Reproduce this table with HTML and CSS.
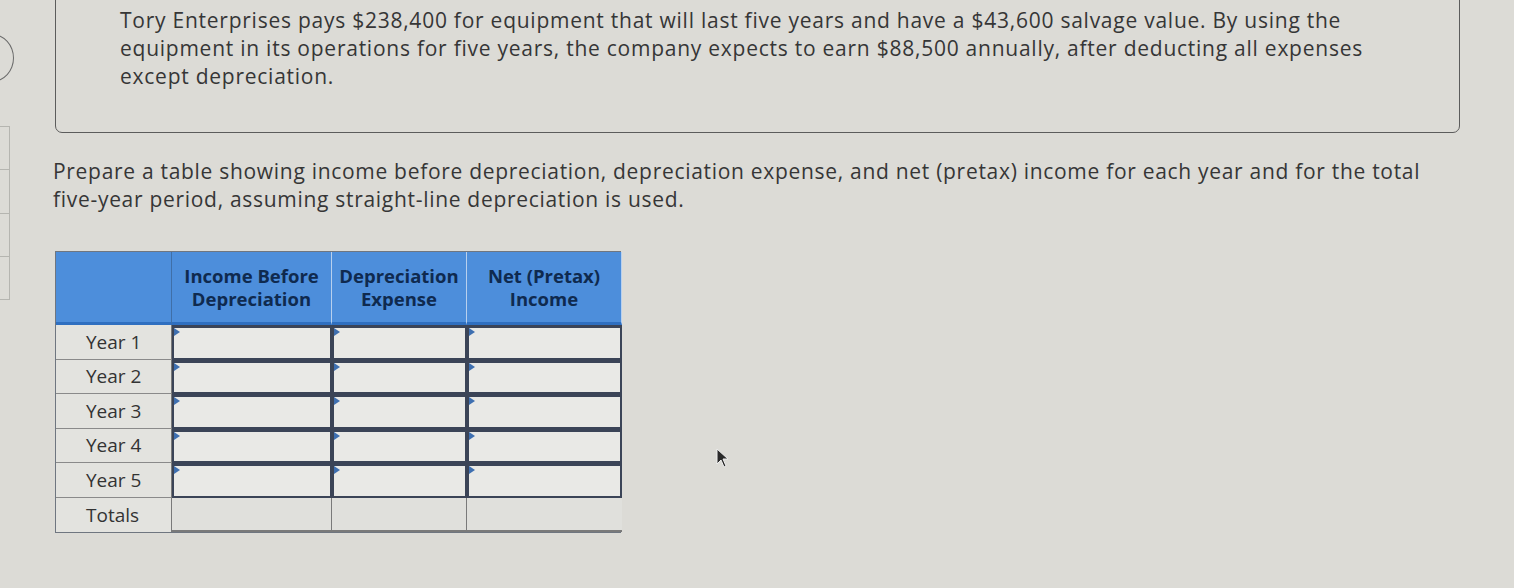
FILE: index.html
```html
<!DOCTYPE html>
<html>
<head>
<meta charset="utf-8">
<link rel="stylesheet" href="styles.css">
</head>
<body>
<div class="page">
  <div class="side">
    <div class="side-circle"></div>
    <div class="side-box"><span></span><span></span><span></span><span></span></div>
  </div>
  <div class="content">
    <div class="problem">
      <p>Tory Enterprises pays $238,400 for equipment that will last five years and have a $43,600 salvage value. By using the<br>equipment in its operations for five years, the company expects to earn $88,500 annually, after deducting all expenses<br>except depreciation.</p>
    </div>
    <p class="prompt">Prepare a table showing income before depreciation, depreciation expense, and net (pretax) income for each year and for the total<br>five-year period, assuming straight-line depreciation is used.</p>
    <div class="grid">
      <div class="hd hd-blank"></div>
      <div class="hd">Income Before<br>Depreciation</div>
      <div class="hd">Depreciation<br>Expense</div>
      <div class="hd">Net (Pretax)<br>Income</div>

      <div class="lbl">Year 1</div>
      <div class="inp"></div><div class="inp"></div><div class="inp"></div>
      <div class="lbl">Year 2</div>
      <div class="inp"></div><div class="inp"></div><div class="inp"></div>
      <div class="lbl">Year 3</div>
      <div class="inp"></div><div class="inp"></div><div class="inp"></div>
      <div class="lbl">Year 4</div>
      <div class="inp"></div><div class="inp"></div><div class="inp"></div>
      <div class="lbl">Year 5</div>
      <div class="inp"></div><div class="inp"></div><div class="inp"></div>
      <div class="lbl">Totals</div>
      <div class="tot"></div><div class="tot"></div><div class="tot"></div>
    </div>
  </div>
  <svg class="cursor" width="16" height="22" viewBox="0 0 16 22"><path d="M1 1 L1 16 L5 12 L8 19 L10 18 L7 11 L12 11 Z" fill="#2a2a2a" stroke="#eee" stroke-width="1"/></svg>
</div>
</body>
</html>
```

FILE: styles.css
```css
html, body {
  margin: 0;
  padding: 0;
  background: #dcdbd6;
}
body {
  width: 1514px;
  height: 588px;
  overflow: hidden;
  font-family: "Open Sans", "Lato", sans-serif;
  color: #3b3b3b;
}
.page {
  position: relative;
  display: flex;
  height: 588px;
}
.side {
  width: 53px;
  flex: none;
  display: flex;
  flex-direction: column;
}
.side-circle {
  width: 42px;
  height: 46px;
  margin-top: 34px;
  margin-left: -30px;
  border: 1.5px solid #6a6a6a;
  border-radius: 50%;
}
.side-box {
  margin-top: 44px;
  width: 9px;
  height: 172px;
  border: 1px solid #b5b5b0;
  border-left: none;
  display: flex;
  flex-direction: column;
}
.side-box span {
  flex: 1;
  border-bottom: 1px solid #b5b5b0;
}
.side-box span:last-child { border-bottom: none; }
.content {
  flex: 1;
}
.problem {
  margin-top: -12px;
  margin-left: 2px;
  width: 1339px;
  border: 1.5px solid #5c5c5c;
  border-radius: 7px;
  padding: 17px 0 42px 64px;
}
.problem p {
  margin: 0;
  font-size: 21px;
  line-height: 28px;
  letter-spacing: 0.75px;
  color: #363636;
  white-space: nowrap;
}
.prompt {
  margin: 24px 0 0 0;
  font-size: 21px;
  line-height: 28px;
  letter-spacing: 0.7px;
  color: #363636;
  white-space: nowrap;
}
.grid {
  margin-top: 38px;
  margin-left: 2px;
  display: grid;
  grid-template-columns: 116px 160px 135px 155px;
  grid-template-rows: 73px repeat(6, 34.5px);
  width: 566px;
  border: 1px solid #6f7680;
  box-sizing: border-box;
}
.hd {
  background: #4d8edb;
  border-right: 1.5px solid #b8d0ee;
  border-bottom: 3px solid #2f6fc0;
  color: #0f2a4f;
  font-weight: 700;
  font-size: 18.5px;
  line-height: 23px;
  text-align: center;
  padding-top: 12px;
  box-sizing: border-box;
  white-space: nowrap;
}
.hd:last-of-type { border-right: none; }
.hd-blank { border-right: 1.5px solid #3f6fa8; }
.lbl {
  background: #e3e3df;
  border-right: 1px solid #7a7a7a;
  border-bottom: 1px solid #8a8a8a;
  font-size: 19px;
  color: #333;
  display: flex;
  align-items: center;
  padding-left: 30px;
  box-sizing: border-box;
}
.lbl:nth-last-of-type(4) { border-bottom: none; }
.inp {
  position: relative;
  background: #e9e9e6;
  border: 2px solid #3b4457;
  border-top-width: 3px;
  box-sizing: border-box;
}
.inp::before {
  content: "";
  position: absolute;
  left: 0;
  top: 0;
  border-left: 6px solid #3e6fb0;
  border-top: 4px solid transparent;
  border-bottom: 4px solid transparent;
}
.tot {
  background: #e0e0dc;
  border-right: 1px solid #7a7a7a;
  border-bottom: 2px solid #7a7a7a;
  box-sizing: border-box;
}
.tot:last-child { border-right: none; }
.cursor {
  position: absolute;
  left: 716px;
  top: 448px;
}
```
